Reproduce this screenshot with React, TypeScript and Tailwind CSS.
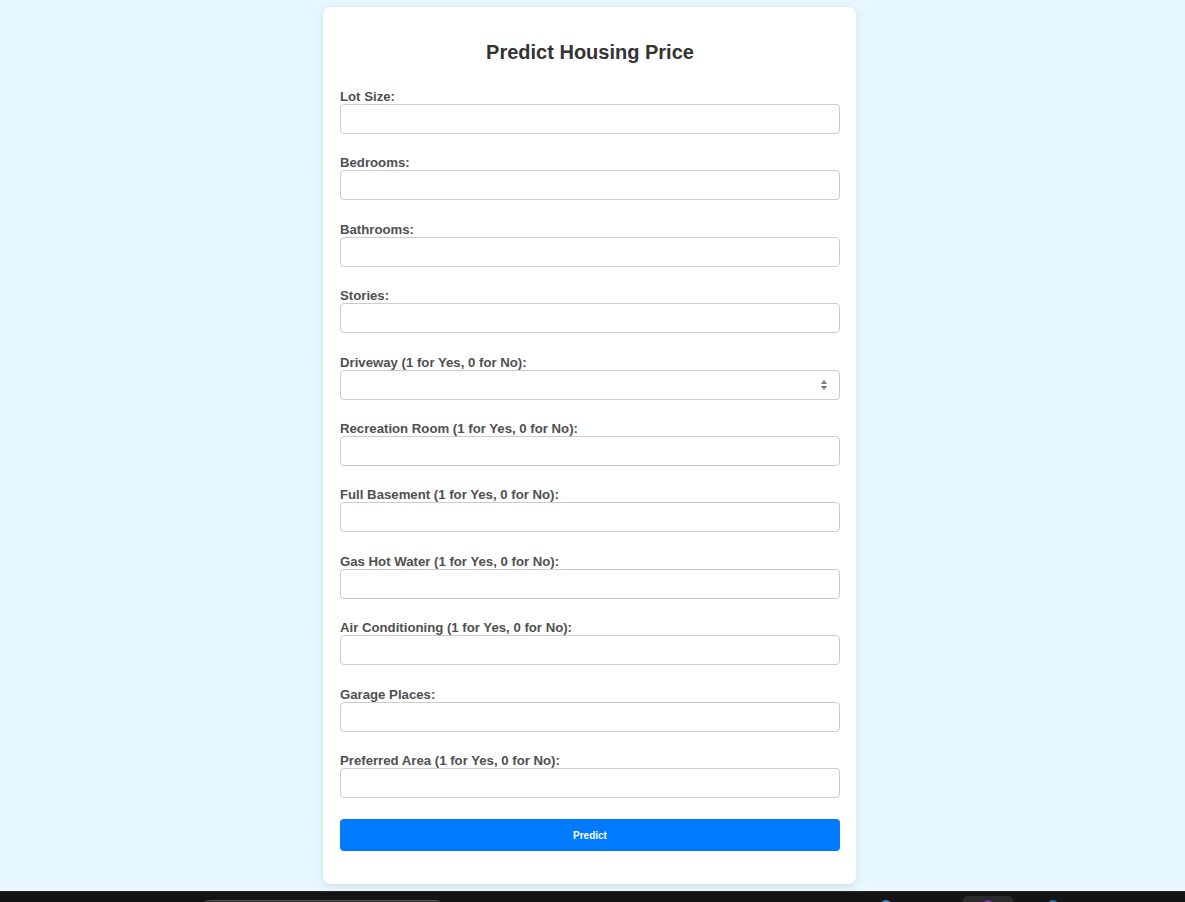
const fields = [
  { label: "Lot Size:" },
  { label: "Bedrooms:" },
  { label: "Bathrooms:" },
  { label: "Stories:" },
  { label: "Driveway (1 for Yes, 0 for No):", spinner: true },
  { label: "Recreation Room (1 for Yes, 0 for No):" },
  { label: "Full Basement (1 for Yes, 0 for No):" },
  { label: "Gas Hot Water (1 for Yes, 0 for No):" },
  { label: "Air Conditioning (1 for Yes, 0 for No):" },
  { label: "Garage Places:" },
  { label: "Preferred Area (1 for Yes, 0 for No):" },
];

function Spinner() {
  return (
    <svg width="8" height="12" viewBox="0 0 8 12" className="absolute right-[12px] top-[9px]">
      <path d="M4 1 L7 5 L1 5 Z" fill="#777" />
      <path d="M4 11 L7 7 L1 7 Z" fill="#777" />
    </svg>
  );
}

export default function App() {
  return (
    <div className="flex min-h-[902px] flex-col font-['Liberation_Sans',Arial,sans-serif]">
      <div className="flex h-[891px] justify-center bg-[#e6f7ff] pr-[6px] pt-[7px]">
        <div className="h-[877px] w-[533px] rounded-[8px] bg-white pl-[17px] pr-[16px] pt-[34px] pb-[32px] shadow-[0_2px_8px_rgba(0,0,0,0.1)]">
          <h2 className="mb-[25px] text-center text-[20px] font-bold leading-[23px] text-[#333]">
            Predict Housing Price
          </h2>

          <form onSubmit={(e) => e.preventDefault()}>
            {fields.map((f) => (
              <div key={f.label} className="mb-[21.4px]">
                <label className="block text-[13.2px] font-bold leading-[15px] text-[#505050]">
                  {f.label}
                </label>
                <div className="relative">
                  <input
                    type="text"
                    className="block h-[30px] w-full rounded-[4px] border border-[#ccc] bg-white px-2 text-[13px] outline-none"
                  />
                  {f.spinner && <Spinner />}
                </div>
              </div>
            ))}

            <button
              type="submit"
              className="block h-[32px] w-full rounded-[4px] bg-[#007bff] text-[10px] font-bold text-white"
            >
              Predict
            </button>
          </form>
        </div>
      </div>

      {/* taskbar strip */}
      <div className="flex h-[11px] items-start overflow-hidden border-t border-[#2a2a2a] bg-[#141414] pl-[200px] pt-[8px]">
        <div className="h-[20px] w-[245px] shrink-0 rounded-[10px] border border-[#555] bg-[#2a2a2a]" />
        <div className="ml-[435px] h-[12px] w-[12px] shrink-0 rounded-full bg-[#2b8fd6]" />
        <div className="-mt-[4px] ml-[71px] flex h-[24px] w-[50px] shrink-0 justify-center rounded-[5px] bg-[#2a2a2a] pt-[4px]">
          <div className="h-[12px] w-[12px] rounded-full bg-[#7b2fbf]" />
        </div>
        <div className="ml-[34px] h-[12px] w-[12px] shrink-0 rounded-full bg-[#1f6fb5]" />
      </div>
    </div>
  );
}
